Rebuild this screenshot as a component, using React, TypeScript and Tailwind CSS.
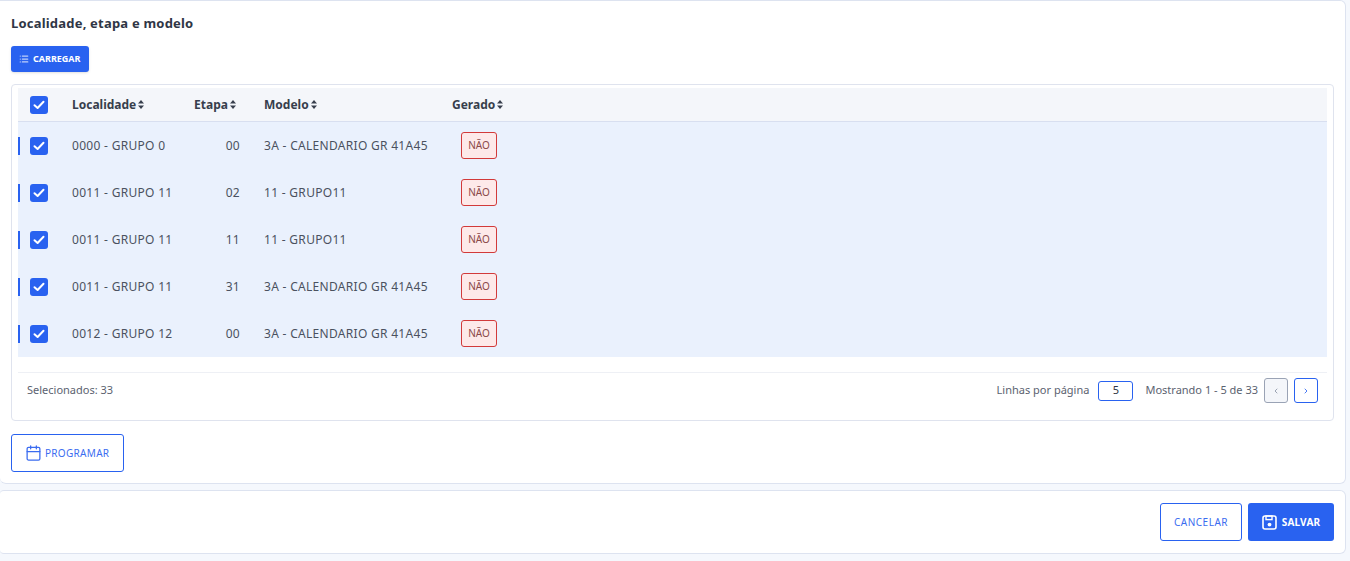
import { Calendar, List, ChevronLeft, ChevronRight } from 'lucide-react';

const rows = [
  { localidade: '0000 - GRUPO 0', etapa: '00', modelo: '3A - CALENDARIO GR 41A45' },
  { localidade: '0011 - GRUPO 11', etapa: '02', modelo: '11 - GRUPO11' },
  { localidade: '0011 - GRUPO 11', etapa: '11', modelo: '11 - GRUPO11' },
  { localidade: '0011 - GRUPO 11', etapa: '31', modelo: '3A - CALENDARIO GR 41A45' },
  { localidade: '0012 - GRUPO 12', etapa: '00', modelo: '3A - CALENDARIO GR 41A45' },
];

function SortIcon() {
  return (
    <svg width="6" height="9" viewBox="0 0 6 9" className="ml-[2px] inline-block" fill="currentColor">
      <path d="M3 0 L6 3.4 H0 Z" />
      <path d="M3 9 L6 5.6 H0 Z" />
    </svg>
  );
}

function Check() {
  return (
    <span className="flex h-[18px] w-[18px] items-center justify-center rounded-[3px] bg-[#2962f0]">
      <svg width="12" height="10" viewBox="0 0 12 10" fill="none">
        <path d="M1.5 5.2 L4.6 8 L10.5 1.8" stroke="white" strokeWidth="2" strokeLinecap="round" strokeLinejoin="round" />
      </svg>
    </span>
  );
}

function SaveIcon() {
  return (
    <svg width="15" height="15" viewBox="0 0 15 15" fill="none">
      <rect x="1" y="1" width="13" height="13" rx="2" stroke="white" strokeWidth="1.6" />
      <rect x="4" y="1" width="6" height="3.6" stroke="white" strokeWidth="1.4" />
      <circle cx="7.5" cy="9.6" r="1.9" fill="white" />
    </svg>
  );
}

export default function App() {
  return (
    <div className="min-h-screen bg-[#f5f8fd] pr-[4px] text-[#3b4352]" style={{ fontFamily: '"Noto Sans", "Liberation Sans", sans-serif' }}>
      {/* Main card */}
      <div className="rounded-r-md rounded-b-md border border-l-0 border-[#dde3f0] bg-white px-[11px] pb-[11px] pt-[12px]">
        <h2 className="text-[13px] font-bold leading-[20px] tracking-[0.2px] text-[#2f3645]">Localidade, etapa e modelo</h2>

        <button className="mt-[13px] flex h-[26px] items-center gap-[4px] rounded-[3px] bg-[#2962f0] px-[8px] text-[9px] font-bold text-white shadow-sm">
          <List className="h-[10px] w-[10px] opacity-70" strokeWidth={3} />
          CARREGAR
        </button>

        {/* Table */}
        <div className="mt-[12px] rounded-[4px] border border-[#dfe3ee] px-[6px] pt-[3px]">
          <div className="flex h-[34px] items-center border-b border-[#d8dff0] bg-[#f4f6fa] text-[12px] font-bold text-[#373e4c]">
            <div className="w-[42px] pl-[12px]">
              <Check />
            </div>
            <div className="flex w-[122px] items-center pl-[12px]">
              Localidade
              <SortIcon />
            </div>
            <div className="flex w-[70px] items-center justify-end pr-[16px]">
              Etapa
              <SortIcon />
            </div>
            <div className="flex w-[188px] items-center pl-[12px]">
              Modelo
              <SortIcon />
            </div>
            <div className="flex items-center pl-[12px]">
              Gerado
              <SortIcon />
            </div>
          </div>

          {rows.map((r, i) => (
            <div key={i} className="flex h-[47px] items-center bg-[#eaf1fd] text-[12px] text-[#4a5160]">
              <div className="flex w-[42px] items-center">
                <span className="h-[18px] w-[2px] bg-[#2962f0]" />
                <span className="ml-[10px]">
                  <Check />
                </span>
              </div>
              <div className="w-[122px] pl-[12px] tracking-[0.3px]">{r.localidade}</div>
              <div className="w-[70px] pr-[12px] text-right tracking-[0.3px]">{r.etapa}</div>
              <div className="w-[188px] pl-[12px] tracking-[0.3px]">{r.modelo}</div>
              <div className="pl-[21px]">
                <span className="flex h-[27px] w-[36px] items-center justify-center rounded-[3px] border border-[#d23a3a] bg-[#fde9e9] text-[10px] text-[#8a4848]">
                  NÃO
                </span>
              </div>
            </div>
          ))}

          <div className="mt-[15px] flex items-center justify-between border-t border-[#eef0f5] pb-[17px] pl-[9px] pr-[9px] pt-[5px]">
            <span className="text-[11px] text-[#5b6270]">Selecionados: 33</span>
            <div className="flex items-center text-[11px] text-[#5b6270]">
              <span>Linhas por página</span>
              <span className="ml-[9px] flex h-[20px] w-[35px] items-center justify-center rounded-[3px] border border-[#2962f0] text-[11px] text-[#2f3645]">
                5
              </span>
              <span className="ml-[12px]">Mostrando 1 - 5 de 33</span>
              <span className="ml-[6px] flex h-[25px] w-[24px] items-center justify-center rounded-[3px] border border-[#9aa3b5] bg-[#f4f6fa] text-[#8a93a5]">
                <ChevronLeft className="h-[8px] w-[8px]" strokeWidth={2.5} />
              </span>
              <span className="ml-[6px] flex h-[25px] w-[24px] items-center justify-center rounded-[3px] border border-[#2962f0] bg-white text-[#2962f0]">
                <ChevronRight className="h-[8px] w-[8px]" strokeWidth={2.5} />
              </span>
            </div>
          </div>
        </div>

        <button className="mt-[13px] flex h-[38px] w-[113px] items-center gap-[3px] rounded-[3px] border border-[#2962f0] pl-[13px] text-[10px] tracking-[0.3px] text-[#3b6cf0]">
          <Calendar className="h-[18px] w-[17px]" strokeWidth={1.8} />
          PROGRAMAR
        </button>
      </div>

      {/* Footer card */}
      <div className="mt-[6px] flex justify-end gap-[6px] rounded-r-md rounded-l-sm border border-l-0 border-[#dde3f0] bg-white py-[12px] pr-[11px]">
        <button className="h-[38px] w-[82px] rounded-[3px] border border-[#2962f0] text-[10px] tracking-[0.5px] text-[#3b6cf0]">CANCELAR</button>
        <button className="flex h-[38px] w-[86px] items-center justify-center gap-[5px] rounded-[3px] bg-[#2962f0] text-[10px] font-bold tracking-[0.2px] text-white">
          <SaveIcon />
          SALVAR
        </button>
      </div>
    </div>
  );
}
